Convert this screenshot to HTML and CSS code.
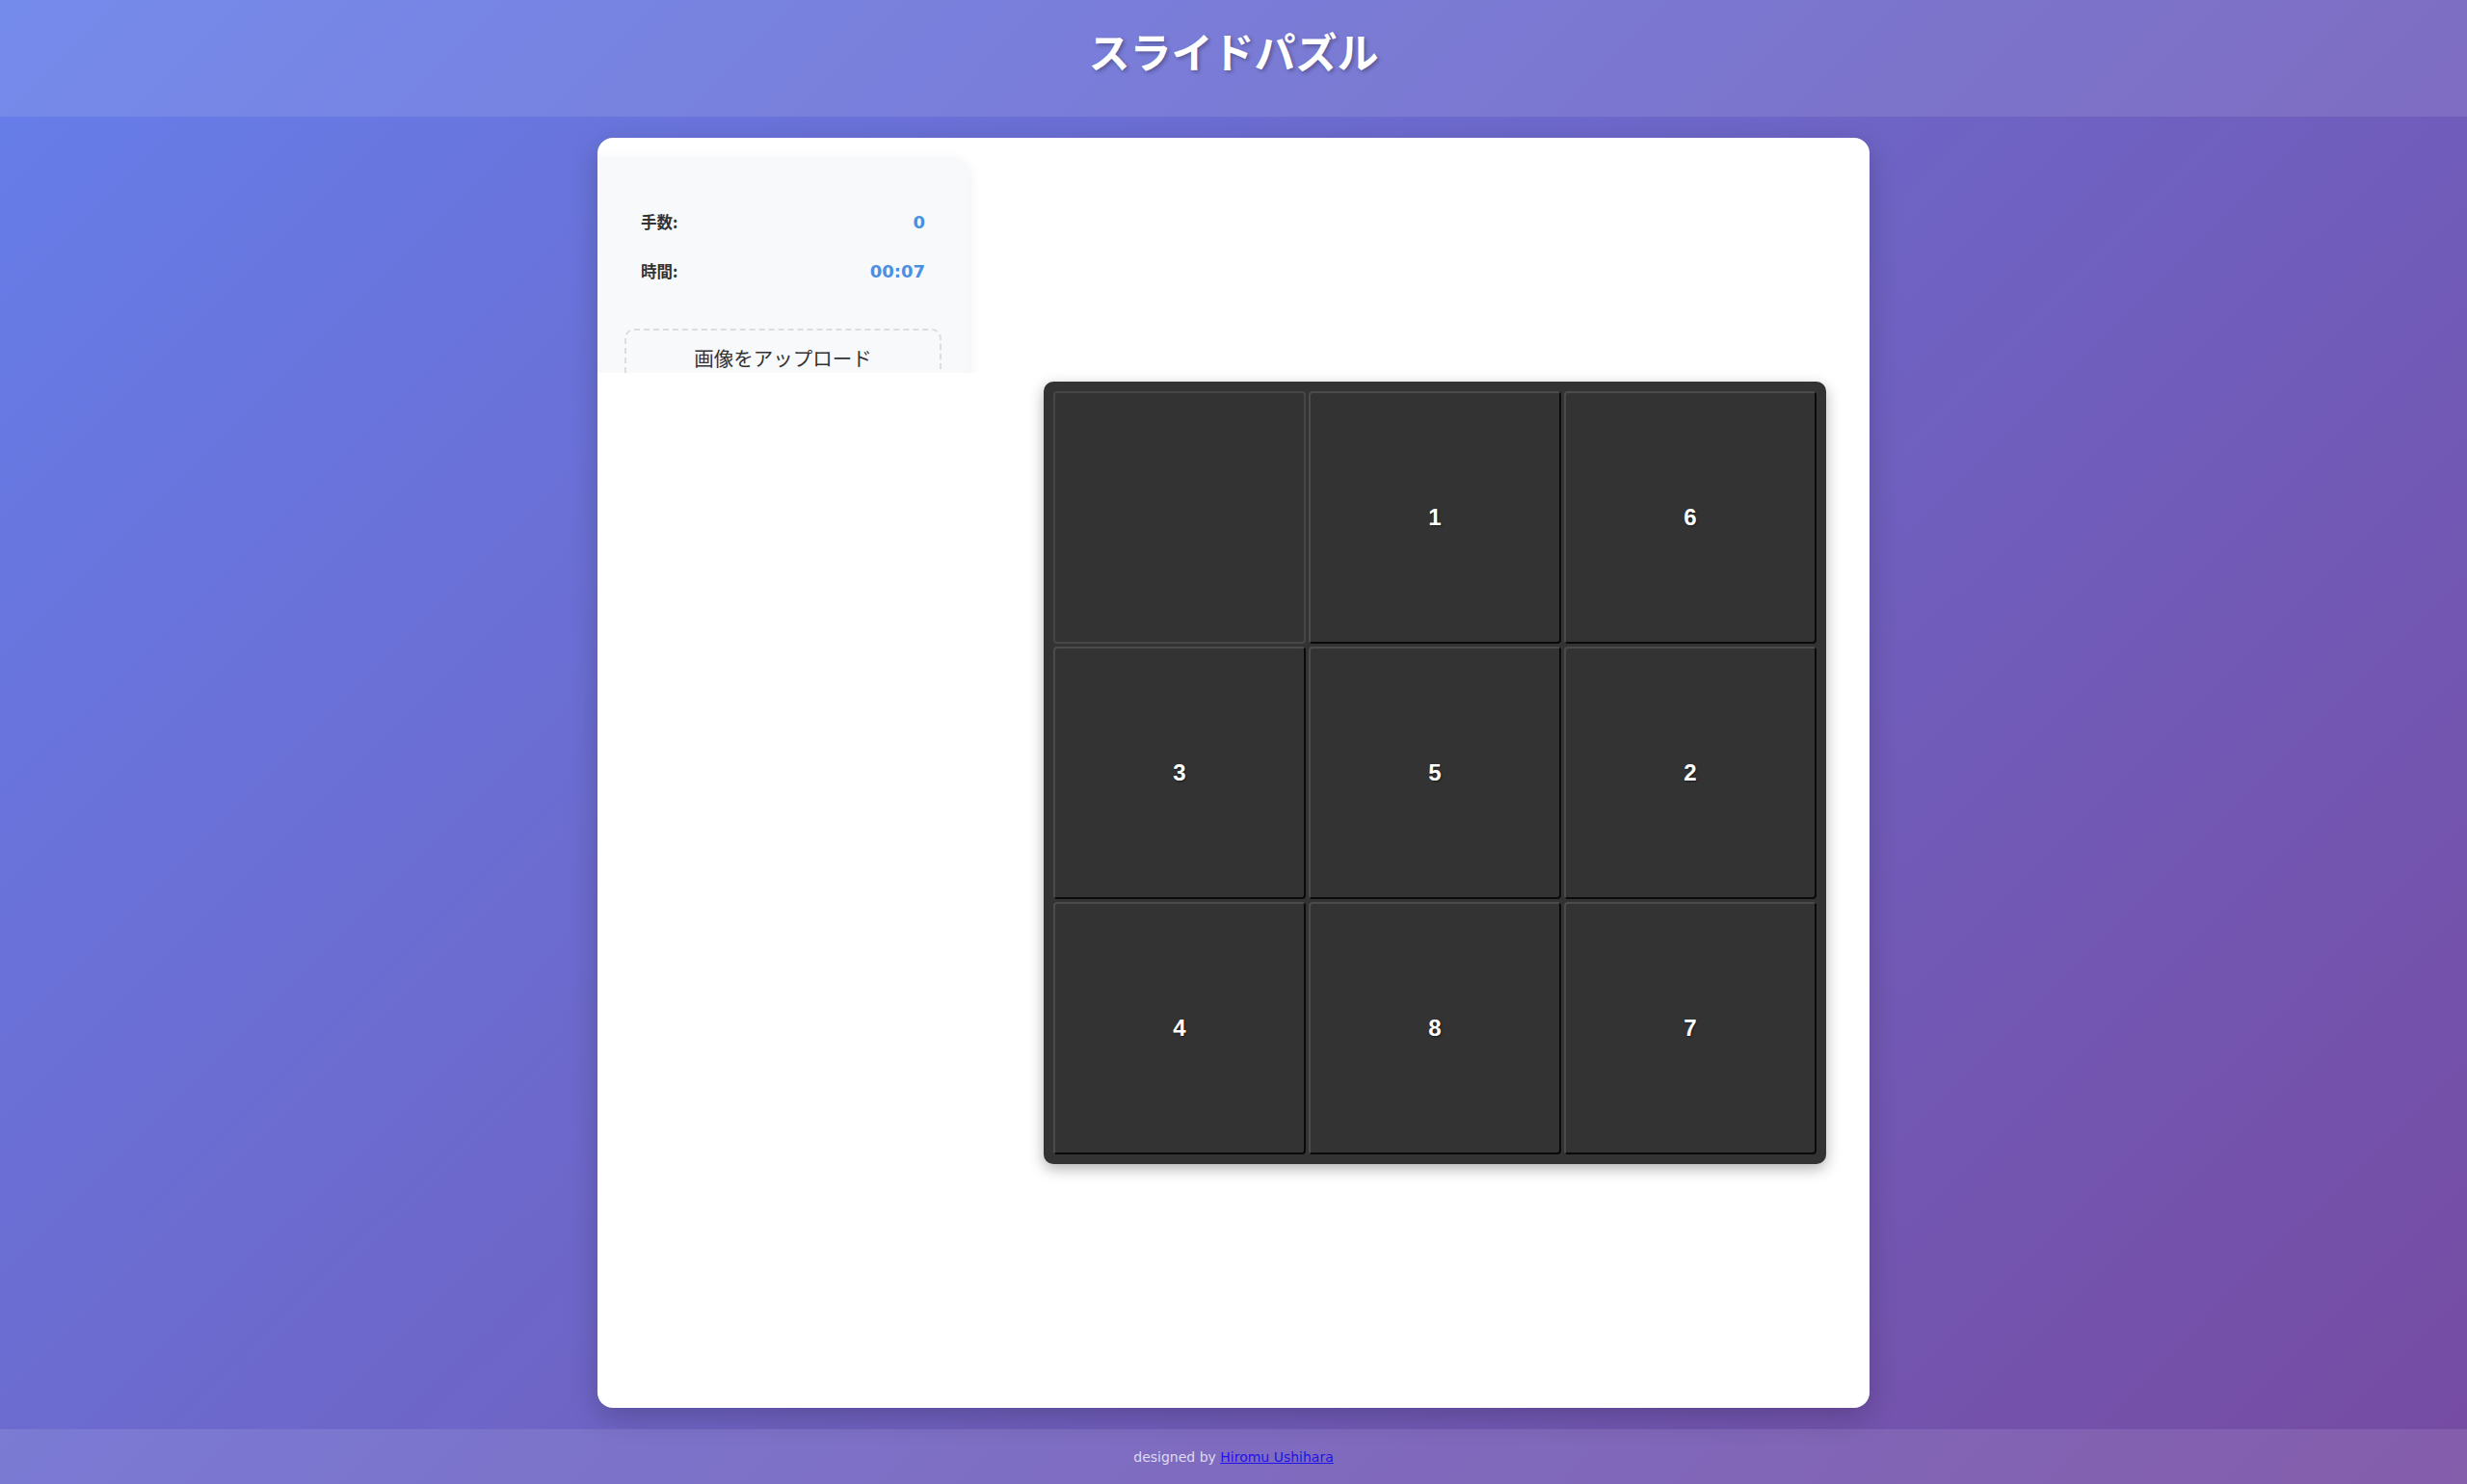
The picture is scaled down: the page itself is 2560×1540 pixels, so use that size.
FILE: index.html
```html
<!DOCTYPE html>
<html lang="ja">
<head>
<meta charset="utf-8">
<title>スライドパズル</title>
<link rel="stylesheet" href="styles.css">
</head>
<body>
<header class="header">
  <h1 class="title">スライドパズル</h1>
</header>
<main class="main">
  <div class="card">
    <div class="side-clip">
      <div class="panel">
        <div class="stats">
          <div class="stat-row"><span class="stat-label">手数:</span><span class="stat-value">0</span></div>
          <div class="stat-row"><span class="stat-label">時間:</span><span class="stat-value">00:07</span></div>
        </div>
        <div class="upload">画像をアップロード</div>
      </div>
    </div>
    <div class="game-area">
      <div class="board">
        <div class="tile empty"></div>
        <div class="tile">1</div>
        <div class="tile">6</div>
        <div class="tile">3</div>
        <div class="tile">5</div>
        <div class="tile">2</div>
        <div class="tile">4</div>
        <div class="tile">8</div>
        <div class="tile">7</div>
      </div>
    </div>
  </div>
</main>
<footer class="footer">
  <span class="credit">designed by <a href="#" class="credit-link">Hiromu Ushihara</a></span>
</footer>
</body>
</html>
```

FILE: styles.css
```css
html, body {
  margin: 0;
  padding: 0;
}
body {
  width: 2560px;
  height: 1540px;
  background: linear-gradient(135deg, #667eea 0%, #764ba2 100%);
  font-family: "DejaVu Sans", "Noto Sans CJK JP", sans-serif;
  color: #333;
  overflow: hidden;
}
.header {
  height: 121px;
  background: rgba(255, 255, 255, 0.1);
  display: flex;
  align-items: center;
  justify-content: center;
}
.title {
  margin: 0 0 16px 0;
  font-family: "Noto Sans CJK JP", sans-serif;
  font-size: 43px;
  font-weight: 700;
  line-height: 1;
  color: #fff;
  text-shadow: 2px 2px 4px rgba(0, 0, 0, 0.3);
}
.main {
  padding: 22px 0;
  display: flex;
  justify-content: center;
}
.card {
  width: 1320px;
  height: 1318px;
  box-sizing: border-box;
  background: #fff;
  border-radius: 16px;
  box-shadow: 0 10px 30px rgba(0, 0, 0, 0.2);
  display: flex;
  padding: 20px 45px 20px 0;
  overflow: hidden;
}
.side-clip {
  flex-shrink: 0;
  align-self: flex-start;
  margin-top: -20px;
  padding: 20px 20px 0 0;
  height: 244px;
  box-sizing: border-box;
  overflow: hidden;
}
.panel {
  margin-left: -20px;
  width: 405px;
  height: 400px;
  box-sizing: border-box;
  padding: 34px 28px 0 48px;
  background: #f8f9fa;
  border-radius: 15px;
  box-shadow: 0 5px 15px rgba(0, 0, 0, 0.08);
}
.stats {
  padding: 15px 17px;
}
.stat-row {
  height: 36px;
  display: flex;
  align-items: center;
  justify-content: space-between;
  margin-bottom: 15px;
}
.stat-row:last-child {
  margin-bottom: 0;
}
.stat-label {
  font-family: "Noto Sans CJK JP", sans-serif;
  font-size: 16.5px;
  font-weight: 700;
  color: #333;
}
.stat-value {
  font-family: "DejaVu Sans", sans-serif;
  font-size: 18px;
  font-weight: 700;
  color: #4a90e2;
}
.upload {
  margin-top: 27px;
  border: 2px dashed #ddd;
  border-radius: 10px;
  padding: 14px 20px 16px;
  text-align: center;
  font-family: "Noto Sans CJK JP", sans-serif;
  font-size: 20.5px;
  line-height: 28px;
  color: #333;
}
.game-area {
  flex: 1;
  display: flex;
  align-items: center;
  justify-content: flex-end;
}
.board {
  display: grid;
  grid-template-columns: repeat(3, 262px);
  grid-template-rows: repeat(3, 262px);
  gap: 3px;
  padding: 10px;
  background: #333;
  border-radius: 10px;
  box-shadow: 0 5px 15px rgba(0, 0, 0, 0.3);
}
.tile {
  box-sizing: border-box;
  background: #333;
  border-radius: 4px;
  border: 2px solid;
  border-color: #4b4b4b #0a0a0a #0a0a0a #4b4b4b;
  display: flex;
  align-items: center;
  justify-content: center;
  color: #fff;
  font-family: "Liberation Sans", Arial, sans-serif;
  font-size: 24px;
  font-weight: 700;
  text-shadow: 1px 1px 2px rgba(0, 0, 0, 0.5);
}
.tile.empty {
  border-color: #464646;
}
.footer {
  height: 57px;
  background: rgba(255, 255, 255, 0.1);
  display: flex;
  align-items: center;
  justify-content: center;
}
.credit {
  font-family: "DejaVu Sans", sans-serif;
  font-size: 14px;
  color: rgba(255, 255, 255, 0.75);
}
.credit-link {
  color: #1d12e8;
}
```
